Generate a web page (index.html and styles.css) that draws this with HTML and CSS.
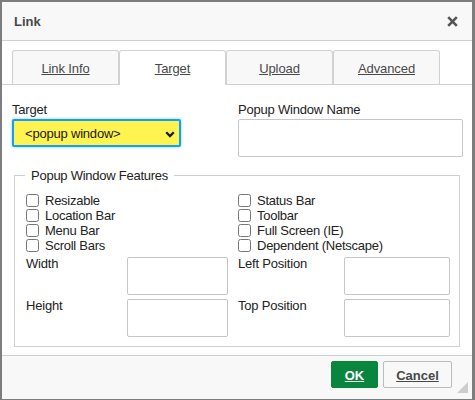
FILE: index.html
```html
<!DOCTYPE html>
<html>
<head>
<meta charset="utf-8">
<link rel="stylesheet" href="styles.css">
</head>
<body>
<div class="dialog">
  <div class="titlebar">
    <span class="title">Link</span>
    <span class="close">
      <svg width="11" height="11" viewBox="0 0 11 11"><path d="M1.2 1.2 L9.8 9.8 M9.8 1.2 L1.2 9.8" stroke="#555" stroke-width="2.6" fill="none"/></svg>
    </span>
  </div>
  <div class="tabs">
    <a class="tab">Link Info</a>
    <a class="tab active">Target</a>
    <a class="tab">Upload</a>
    <a class="tab">Advanced</a>
  </div>
  <div class="content">
    <div class="top-row">
      <div class="field">
        <label class="lbl">Target</label>
        <div class="select-wrap">
          <select class="select"><option>&lt;popup window&gt;</option></select>
          <svg class="chev" width="10" height="7" viewBox="0 0 10 7"><path d="M1.2 1.3 L5 5.1 L8.8 1.3" stroke="#1a1a1a" stroke-width="2.3" fill="none"/></svg>
        </div>
      </div>
      <div class="field">
        <label class="lbl">Popup Window Name</label>
        <input class="text name" type="text">
      </div>
    </div>
    <fieldset class="features">
      <legend>Popup Window Features</legend>
      <div class="checks">
        <label class="chk"><input type="checkbox">Resizable</label>
        <label class="chk"><input type="checkbox">Status Bar</label>
        <label class="chk"><input type="checkbox">Location Bar</label>
        <label class="chk"><input type="checkbox">Toolbar</label>
        <label class="chk"><input type="checkbox">Menu Bar</label>
        <label class="chk"><input type="checkbox">Full Screen (IE)</label>
        <label class="chk"><input type="checkbox">Scroll Bars</label>
        <label class="chk"><input type="checkbox">Dependent (Netscape)</label>
      </div>
      <div class="dims">
        <span class="dlbl">Width</span><input class="text dim" type="text">
        <span class="dlbl">Left Position</span><input class="text dim wide" type="text">
        <span class="dlbl">Height</span><input class="text dim" type="text">
        <span class="dlbl">Top Position</span><input class="text dim wide" type="text">
      </div>
    </fieldset>
  </div>
  <div class="footer">
    <a class="btn ok">OK</a>
    <a class="btn cancel">Cancel</a>
    <svg class="grip" width="11" height="11" viewBox="0 0 11 11"><polygon points="11,0 11,11 0,11" fill="#cdcdcd"/></svg>
  </div>
</div>
</body>
</html>
```

FILE: styles.css
```css
html, body {
  margin: 0;
  padding: 0;
}
body {
  background: #7d7d7d;
  width: 475px;
  height: 400px;
  overflow: hidden;
  font-family: "Liberation Sans", Arial, sans-serif;
  font-size: 13px;
  color: #222;
}
.dialog {
  position: relative;
  margin: 2px 0 0 2px;
  width: 470px;
  height: 397px;
  background: #fff;
  display: flex;
  flex-direction: column;
}
.titlebar {
  height: 38px;
  background: #f8f8f8;
  border-bottom: 1px solid #d1d1d1;
  display: flex;
  align-items: center;
  justify-content: space-between;
  padding: 0 14px 0 12px;
  flex: none;
}
.title {
  font-weight: bold;
  font-size: 13px;
  color: #484848;
}
.close {
  display: flex;
  margin-top: 1px;
}
.tabs {
  margin-top: 9px;
  padding-left: 10px;
  display: flex;
  align-items: flex-end;
  border-bottom: 1px solid #d1d1d1;
  flex: none;
}
.tab {
  box-sizing: border-box;
  width: 107px;
  height: 34px;
  border: 1px solid #d1d1d1;
  border-bottom: none;
  border-radius: 3px 3px 0 0;
  background: #f8f8f8;
  color: #484848;
  text-decoration: underline;
  display: flex;
  align-items: center;
  justify-content: center;
  padding-top: 1px;
  letter-spacing: -0.1px;
}
.tab.active {
  background: #fff;
  height: 35px;
  margin-bottom: -1px;
  padding-bottom: 1px;
}
.content {
  padding: 17px 10px 0 10px;
}
.top-row {
  display: grid;
  grid-template-columns: 214px 225px;
  column-gap: 12px;
}
.field {
  display: flex;
  flex-direction: column;
  align-items: flex-start;
}
.lbl {
  line-height: 15px;
  margin-bottom: 2px;
  letter-spacing: -0.2px;
}
.select-wrap {
  position: relative;
  display: flex;
}
.select {
  -webkit-appearance: none;
  appearance: none;
  box-sizing: border-box;
  width: 169px;
  height: 28px;
  border: 2px solid #139ff7;
  border-radius: 2px;
  background: #fff350;
  box-shadow: 0 0 3px rgba(19, 159, 247, 0.55);
  padding: 0 0 0 11px;
  font-family: "Liberation Sans", Arial, sans-serif;
  font-size: 13px;
  letter-spacing: -0.2px;
  color: #1a1a1a;
  outline: none;
}
.chev {
  position: absolute;
  right: 6px;
  top: 12px;
  pointer-events: none;
}
.text {
  box-sizing: border-box;
  height: 38px;
  border: 1px solid #c6c6c6;
  border-radius: 2px;
  background: #fff;
  margin: 0;
  padding: 0 4px;
  outline: none;
}
.name {
  width: 225px;
}
.features {
  box-sizing: border-box;
  width: 446px;
  margin: 11px 0 0 2px;
  border: 1px solid #cfcfcf;
  padding: 10px 10px 9px 11px;
  min-width: 0;
}
.features legend {
  padding: 0 6px;
  margin-left: -1px;
  line-height: 15px;
  color: #222;
  letter-spacing: -0.25px;
}
.checks {
  display: grid;
  grid-template-columns: 212px auto;
}
.chk {
  display: flex;
  align-items: center;
  height: 15px;
  line-height: 15px;
  letter-spacing: -0.25px;
}
.chk input {
  width: 13px;
  height: 13px;
  margin: 0 6px 0 0;
}
.dims {
  display: grid;
  grid-template-columns: 101px 111px 106px 106px;
  row-gap: 4px;
  margin-top: 4px;
  align-items: start;
}
.dlbl {
  line-height: 15px;
  margin-top: -1px;
  letter-spacing: -0.2px;
}
.dim {
  width: 101px;
}
.dim.wide {
  width: 106px;
}
.footer {
  margin-top: auto;
  height: 38px;
  border-top: 1px solid #d1d1d1;
  background: #f8f8f8;
  display: flex;
  justify-content: flex-end;
  align-items: flex-start;
  padding: 5px 20px 0 0;
  box-sizing: content-box;
  gap: 5px;
  position: relative;
}
.btn {
  box-sizing: border-box;
  height: 27px;
  border-radius: 2px;
  font-weight: bold;
  font-size: 13px;
  text-decoration: underline;
  display: flex;
  align-items: center;
  justify-content: center;
  padding-top: 1px;
}
.ok {
  width: 47px;
  background: #09863e;
  border: 1px solid #09863e;
  color: #fff;
}
.cancel {
  width: 69px;
  background: #f8f8f8;
  border: 1px solid #bcbcbc;
  color: #484848;
}
.grip {
  position: absolute;
  right: 4px;
  bottom: 6px;
}
```
